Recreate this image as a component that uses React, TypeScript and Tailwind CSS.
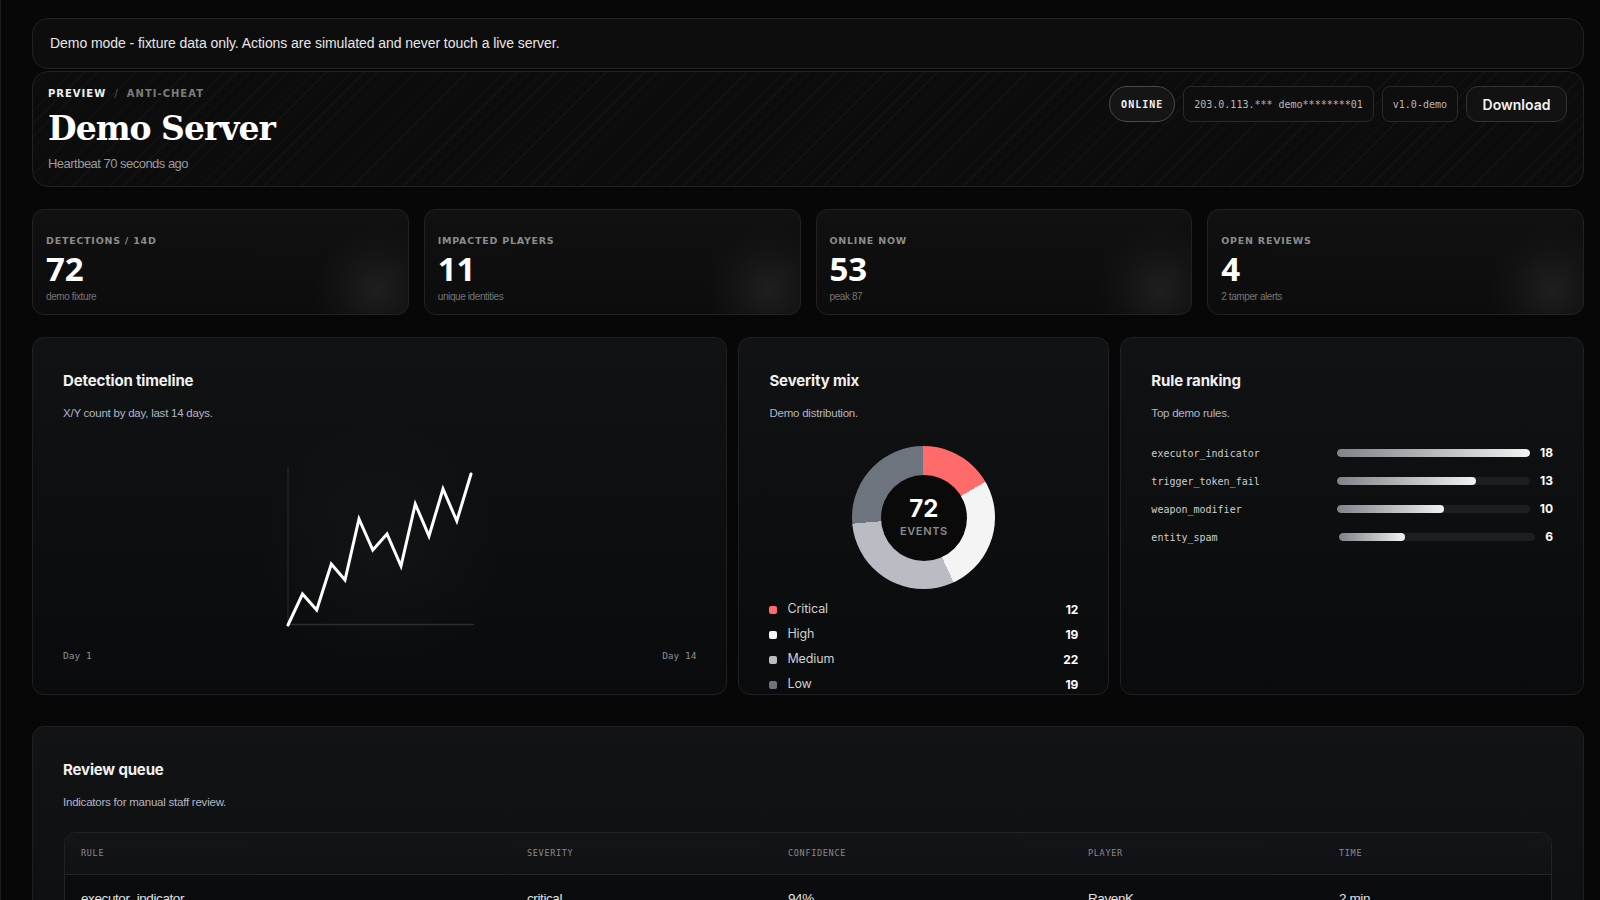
import React from "react";

const sans = "font-['Liberation_Sans',Arial,sans-serif]";
const mono = "font-['DejaVu_Sans_Mono','Liberation_Mono',monospace]";
const head = "font-['Inter','Liberation_Sans',sans-serif]";
const wide = "font-['DejaVu_Sans','Liberation_Sans',sans-serif]";

const stats = [
  { label: "DETECTIONS / 14D", value: "72", sub: "demo fixture" },
  { label: "IMPACTED PLAYERS", value: "11", sub: "unique identities" },
  { label: "ONLINE NOW", value: "53", sub: "peak 87" },
  { label: "OPEN REVIEWS", value: "4", sub: "2 tamper alerts" },
];

const rules = [
  { name: "executor_indicator", n: 18 },
  { name: "trigger_token_fail", n: 13 },
  { name: "weapon_modifier", n: 10 },
  { name: "entity_spam", n: 6 },
];

const legend = [
  { label: "Critical", n: 12, c: "bg-[#ff6b6b]" },
  { label: "High", n: 19, c: "bg-[#f4f4f4]" },
  { label: "Medium", n: 22, c: "bg-[#b9bcc3]" },
  { label: "Low", n: 19, c: "bg-[#6e747d]" },
];

const queue = [
  ["executor_indicator", "critical", "94%", "RavenK", "2 min"],
  ["trigger_token_fail", "high", "81%", "Nova_7", "6 min"],
  ["weapon_modifier", "medium", "67%", "Kestrel", "11 min"],
];

function CardHead({ title, sub }: { title: string; sub: string }) {
  return (
    <>
      <div className={`${head} text-[15px] font-bold leading-[26px] text-[#f0f0f0] tracking-[-0.01em]`}>{title}</div>
      <div className={`${sans} mt-[10px] text-[11.5px] leading-[18px] text-[#b3b6c4] tracking-[-0.02em]`}>{sub}</div>
    </>
  );
}

export default function App() {
  const pts = [
    [4, 163], [18.5, 132], [32.7, 148], [47.3, 102], [61, 118], [75, 57], [88.8, 88],
    [103, 72], [117, 104], [131.3, 42], [145, 74], [159, 27], [172.8, 59], [187, 12],
  ]
    .map((p) => p.join(","))
    .join(" ");

  return (
    <div className={`min-h-screen w-full bg-[#070707] border-l border-[#1d1d1d] pl-[31px] pr-[16px] pt-[18px] pb-10 ${sans}`}>
      {/* Banner */}
      <div className="h-[51px] rounded-2xl border border-[#222] bg-[#0d0d0d] flex items-center pl-[17px]">
        <span className="text-[14px] text-[#e6e6e6] tracking-[-0.004em]">
          Demo mode - fixture data only. Actions are simulated and never touch a live server.
        </span>
      </div>

      {/* Header */}
      <div className="mt-[2px] h-[116px] rounded-2xl border border-[#222] bg-[#0c0c0c] bg-[repeating-linear-gradient(135deg,rgba(255,255,255,0.028)_0px,rgba(255,255,255,0.028)_1px,transparent_1px,transparent_9px)] flex justify-between pl-[15px] pr-[16px] pt-[14px]">
        <div>
          <div className={`${wide} text-[10px] leading-[16px] font-bold tracking-[0.1em] flex items-center gap-[8px]`}>
            <span className="text-[#f0f0f0]">PREVIEW</span>
            <span className="text-[#4a4a4a]">/</span>
            <span className="text-[#7c7c7c]">ANTI-CHEAT</span>
          </div>
          <div className="mt-[7px] font-['DejaVu_Serif',serif] font-bold text-[33px] leading-[40px] text-white tracking-[-0.03em]">
            Demo Server
          </div>
          <div className="mt-[6px] text-[13px] leading-[18px] text-[#9b9b9b] tracking-[-0.04em]">Heartbeat 70 seconds ago</div>
        </div>
        <div className="flex items-start gap-2">
          <div className={`${mono} h-[36px] px-[11px] rounded-full border border-[#4a4a4a] bg-[#151515] flex items-center text-[10px] font-bold tracking-[0.1em] text-[#f2f2f2]`}>
            ONLINE
          </div>
          <div className={`${mono} h-[36px] px-[10px] rounded-lg border border-[#2a2a2a] bg-[#0e0e0e] flex items-center text-[10px] text-[#b8b8b8]`}>
            203.0.113.*** demo********01
          </div>
          <div className={`${mono} h-[36px] px-[10px] rounded-lg border border-[#2a2a2a] bg-[#0e0e0e] flex items-center text-[10px] text-[#b8b8b8]`}>
            v1.0-demo
          </div>
          <button className={`${head} h-[36px] w-[101px] rounded-xl border border-[#333] bg-[#121212] text-[14px] font-semibold text-[#f2f2f2] flex items-center justify-center`}>
            Download
          </button>
        </div>
      </div>

      {/* Stats */}
      <div className="mt-[22px] grid grid-cols-4 gap-[15px]">
        {stats.map((s) => (
          <div
            key={s.label}
            className="relative h-[106px] rounded-xl border border-[#222] bg-gradient-to-b from-[#111] to-[#0c0c0c] overflow-hidden pl-[13px] pt-[24px]"
          >
            <div className="pointer-events-none absolute right-[-34px] bottom-[-42px] h-[130px] w-[130px] rounded-full bg-[radial-gradient(circle,rgba(255,255,255,0.075)_0%,rgba(255,255,255,0.02)_45%,transparent_70%)]" />
            <div className={`${wide} text-[9.5px] leading-[14px] font-bold tracking-[0.08em] text-[#8c8c8c]`}>{s.label}</div>
            <div className="mt-[3px] font-['Open_Sans',sans-serif] text-[33px] leading-[36px] font-bold text-white">{s.value}</div>
            <div className="mt-[3px] text-[10px] leading-[14px] text-[#757575] tracking-[-0.04em]">{s.sub}</div>
          </div>
        ))}
      </div>

      {/* Middle row */}
      <div className="mt-[22px] grid grid-cols-[1.5fr_0.8fr_1fr] gap-[11px]">
        {/* Timeline */}
        <div className="h-[358px] rounded-xl border border-[#1f2023] bg-gradient-to-b from-[#111214] to-[#0a0b0d] p-[30px] flex flex-col">
          <CardHead title="Detection timeline" sub="X/Y count by day, last 14 days." />
          <div className="mt-[40px] flex justify-center">
            <div className="relative">
              <div className="pointer-events-none absolute -inset-10 rounded-full bg-[radial-gradient(circle,rgba(255,255,255,0.025),transparent_70%)]" />
              <svg width="192" height="168" viewBox="0 0 192 168" className="relative">
                <line x1="4" y1="5" x2="4" y2="163" stroke="#2e2f33" strokeWidth="1" />
                <line x1="4" y1="162.5" x2="190" y2="162.5" stroke="#2e2f33" strokeWidth="1.5" />
                <polyline points={pts} fill="none" stroke="#ffffff" strokeWidth="3" strokeLinejoin="miter" strokeLinecap="round" />
              </svg>
            </div>
          </div>
          <div className={`${mono} mt-[19px] flex justify-between text-[9.5px] leading-[14px] text-[#8e8e8e]`}>
            <span>Day 1</span>
            <span>Day 14</span>
          </div>
        </div>

        {/* Severity */}
        <div className="h-[358px] rounded-xl border border-[#1f2023] bg-gradient-to-b from-[#111214] to-[#0a0b0d] pt-[30px] px-[30px] overflow-hidden">
          <CardHead title="Severity mix" sub="Demo distribution." />
          <div className="mt-[24px] flex justify-center">
            <div className="relative h-[143px] w-[143px] rounded-full bg-[conic-gradient(#ff6b6b_0deg_60deg,#f4f4f4_60deg_155deg,#b9bcc3_155deg_265deg,#6e747d_265deg_360deg)]">
              <div className="absolute inset-[28.5px] rounded-full bg-[#0a0a0b] flex flex-col items-center justify-center">
                <div className={`${head} text-[24px] leading-[28px] font-bold text-white mt-[-2px]`}>72</div>
                <div className={`${head} text-[11px] leading-[14px] font-semibold tracking-[0.06em] text-[#8b8b8b] mt-[1px]`}>EVENTS</div>
              </div>
            </div>
          </div>
          <div className="mt-[8px]">
            {legend.map((l) => (
              <div key={l.label} className="h-[25px] flex items-center">
                <span className={`h-[8px] w-[8px] rounded-[2px] ${l.c}`} />
                <span className={`${head} ml-[10px] text-[12.5px] text-[#cfcfcf] tracking-[-0.01em]`}>{l.label}</span>
                <span className={`${head} ml-auto text-[12px] font-bold text-white`}>{l.n}</span>
              </div>
            ))}
          </div>
        </div>

        {/* Rule ranking */}
        <div className="h-[358px] rounded-xl border border-[#1f2023] bg-gradient-to-b from-[#111214] to-[#0a0b0d] p-[30px]">
          <CardHead title="Rule ranking" sub="Top demo rules." />
          <div className="mt-[17px]">
            {rules.map((r) => (
              <div key={r.name} className="h-[28px] grid grid-cols-[minmax(0,1fr)_minmax(0,1.1fr)_auto] gap-x-[10px] items-center">
                <span className={`${mono} text-[10px] text-[#cdcdcd]`}>{r.name}</span>
                <div className="h-[8px] rounded-full bg-[#1d1e21] overflow-hidden">
                  <div
                    className="h-full rounded-full bg-gradient-to-r from-[#80838a] to-[#f2f2f2]"
                    style={{ width: `${(r.n / 18) * 100}%` }}
                  />
                </div>
                <span className={`${head} text-[12px] font-bold text-white`}>{r.n}</span>
              </div>
            ))}
          </div>
        </div>
      </div>

      {/* Review queue */}
      <div className="mt-[31px] rounded-xl border border-[#1f2023] bg-gradient-to-b from-[#121315] to-[#0c0d0f] px-[30px] pt-[30px] pb-[30px]">
        <CardHead title="Review queue" sub="Indicators for manual staff review." />
        <div className="mt-[21px] mx-[1px] rounded-xl border border-[#222327] overflow-hidden">
          <div className={`${mono} h-[42px] grid grid-cols-[446px_261px_300px_251px_1fr] items-center bg-gradient-to-b from-[#141518] to-[#101114] border-b border-[#25262a] text-[8.5px] tracking-[0.08em] text-[#8a8a8a]`}>
            <span className="pl-4">RULE</span>
            <span className="pl-4">SEVERITY</span>
            <span className="pl-4">CONFIDENCE</span>
            <span className="pl-4">PLAYER</span>
            <span className="pl-4">TIME</span>
          </div>
          {queue.map((row) => (
            <div
              key={row[0]}
              className="h-[50px] grid grid-cols-[446px_261px_300px_251px_1fr] items-center bg-[#0b0c0e] border-b border-[#1c1d20] text-[13.5px] text-[#e2e2e2] tracking-[-0.03em]"
            >
              {row.map((c, i) => (
                <span key={i} className="pl-4">{c}</span>
              ))}
            </div>
          ))}
        </div>
      </div>
    </div>
  );
}
